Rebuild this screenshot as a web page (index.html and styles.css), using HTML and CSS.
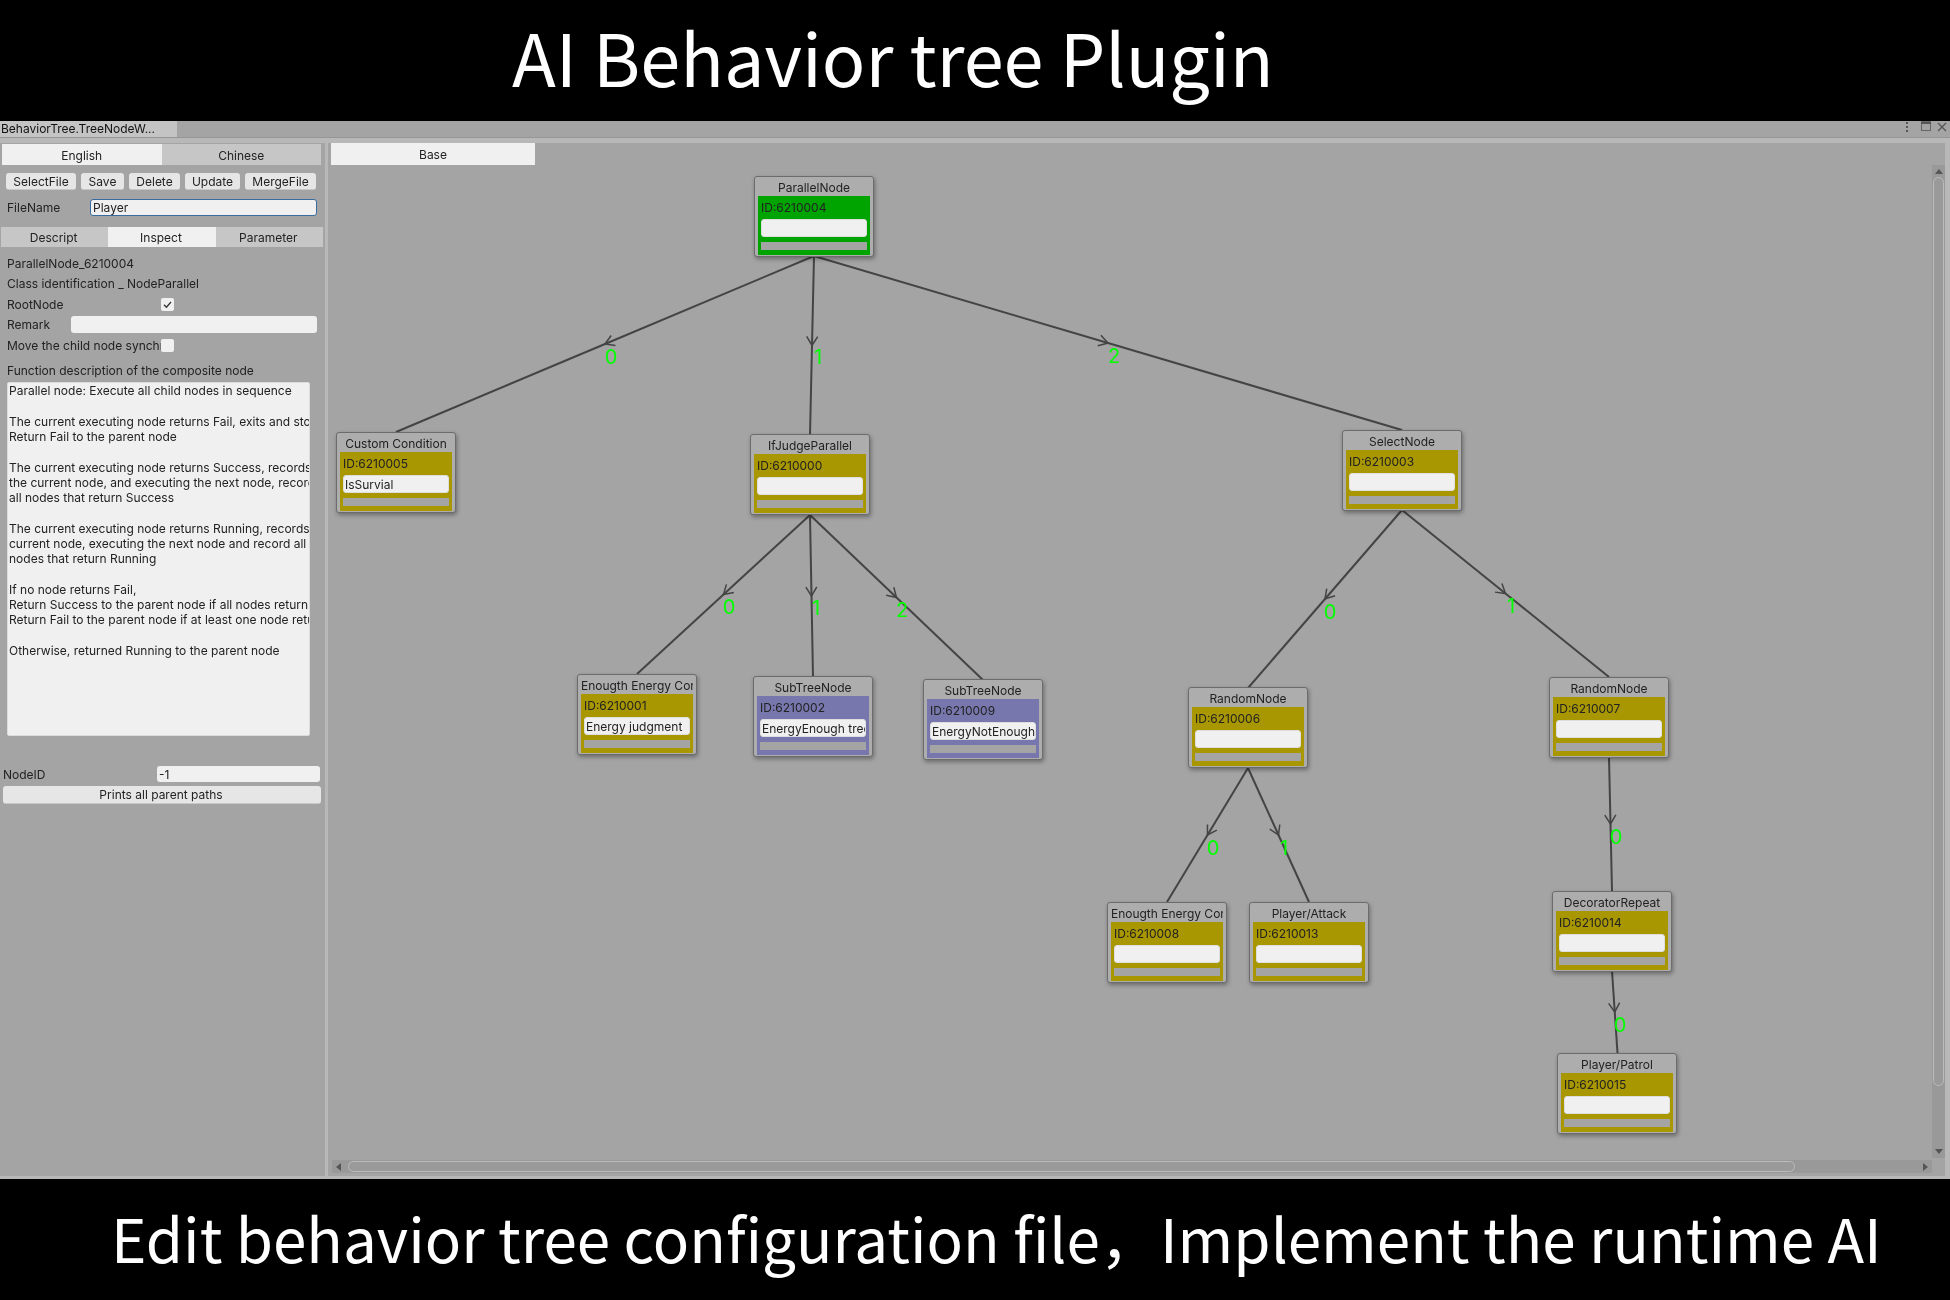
FILE: index.html
```html
<!DOCTYPE html>
<html lang="en">

<head>
  <meta charset="UTF-8">
  <meta name="viewport" content="width=device-width, initial-scale=1.0">
  <title>AI Behavior tree Plugin</title>
  <link rel="stylesheet" href="styles.css">
</head>

<body>
  <div class="banner banner-top">AI Behavior tree Plugin</div>

  <div class="window">
    <!-- Window tab strip -->
    <div class="tabstrip">
      <div class="window-tab">BehaviorTree.TreeNodeW...</div>
      <svg class="window-icons" width="46" height="16" viewBox="0 0 46 16">
        <g fill="#555">
          <rect x="2" y="1" width="2" height="2"/>
          <rect x="2" y="5" width="2" height="2"/>
          <rect x="2" y="9" width="2" height="2"/>
        </g>
        <rect x="17.5" y="1" width="9" height="8.5" fill="none" stroke="#666"/>
        <rect x="17" y="0.5" width="10" height="2.5" fill="#555"/>
        <path d="M34 2 L42 10 M42 2 L34 10" stroke="#555" stroke-width="1.3"/>
      </svg>
    </div>

    <div class="workspace">
      <!-- Left inspector panel -->
      <div class="sidebar">
        <div class="tabs tabs-lang">
          <div class="tab active">English</div>
          <div class="tab">Chinese</div>
        </div>

        <div class="toolbar">
          <div class="btn btn-select">SelectFile</div>
          <div class="btn btn-save">Save</div>
          <div class="btn btn-delete">Delete</div>
          <div class="btn btn-update">Update</div>
          <div class="btn btn-merge">MergeFile</div>
        </div>

        <div class="file-row">
          <span class="file-label">FileName</span>
          <div class="input input-focus">Player</div>
        </div>

        <div class="tabs tabs-view">
          <div class="tab">Descript</div>
          <div class="tab active">Inspect</div>
          <div class="tab">Parameter</div>
        </div>

        <div class="inspect">
          <div class="row">ParallelNode_6210004</div>
          <div class="row">Class identification _ NodeParallel</div>
          <div class="row">
            <span class="row-label">RootNode</span>
            <div class="checkbox">
              <svg width="13" height="13" viewBox="0 0 13 13">
                <path d="M3 6.8 L5.4 9.2 L10 4" fill="none" stroke="#333" stroke-width="1.3"/>
              </svg>
            </div>
          </div>
          <div class="row">
            <span class="remark-label">Remark</span>
            <div class="input remark-input"></div>
          </div>
          <div class="row">
            <span class="row-label">Move the child node synchronously</span>
            <div class="checkbox"></div>
          </div>
          <div class="row row-function">Function description of the composite node</div>
          <div class="description">Parallel node: Execute all child nodes in sequence

The current executing node returns Fail, exits and stops
Return Fail to the parent node

The current executing node returns Success, records
the current node, and executing the next node, records
all nodes that return Success

The current executing node returns Running, records
current node, executing the next node and record all
nodes that return Running

If no node returns Fail,
Return Success to the parent node if all nodes return
Return Fail to the parent node if at least one node returns

Otherwise, returned Running to the parent node</div>
        </div>

        <div class="nodeid-row">
          <span class="nodeid-label">NodeID</span>
          <div class="input nodeid-input">-1</div>
        </div>
        <div class="btn btn-paths">Prints all parent paths</div>
      </div>

      <!-- Behavior tree canvas -->
      <div class="canvas">
        <div class="base-tab">Base</div>

        <svg class="edges" width="1617" height="1033" viewBox="328 143 1617 1033">
          <defs>
            <marker id="arrow" markerUnits="userSpaceOnUse" markerWidth="24" markerHeight="24" refX="12" refY="12" orient="auto">
              <path d="M3 6.5 L12 12 L3 17.5" fill="none" stroke="#444" stroke-width="1.5"/>
            </marker>
          </defs>
          <polyline class="edge" points="814,256 605,344 396,432"/>
          <polyline class="edge" points="814,256 812,345.5 810,435"/>
          <polyline class="edge" points="814,256 1108,343 1402,430"/>
          <polyline class="edge" points="810,515 723.5,594.5 637,674"/>
          <polyline class="edge" points="810,515 811.5,596 813,677"/>
          <polyline class="edge" points="810,515 896.5,597.5 983,680"/>
          <polyline class="edge" points="1402,510 1325,599 1248,688"/>
          <polyline class="edge" points="1402,510 1505.5,593.5 1609,677"/>
          <polyline class="edge" points="1248,768 1207.5,835 1167,902"/>
          <polyline class="edge" points="1248,768 1278.5,835 1309,902"/>
          <polyline class="edge" points="1609,757 1610.5,824 1612,891"/>
          <polyline class="edge" points="1612,971 1614.75,1012 1617.5,1053"/>
          <text class="edge-label" x="611" y="364">0</text>
          <text class="edge-label" x="818" y="364">1</text>
          <text class="edge-label" x="1114" y="363">2</text>
          <text class="edge-label" x="729" y="614">0</text>
          <text class="edge-label" x="816" y="615">1</text>
          <text class="edge-label" x="902" y="617">2</text>
          <text class="edge-label" x="1330" y="619">0</text>
          <text class="edge-label" x="1511" y="613">1</text>
          <text class="edge-label" x="1213" y="855">0</text>
          <text class="edge-label" x="1284" y="855">1</text>
          <text class="edge-label" x="1616" y="844">0</text>
          <text class="edge-label" x="1620" y="1032">0</text>
        </svg>

        <div class="node node-parallel">
          <div class="node-title">ParallelNode</div>
          <div class="node-body body-green">
            <div class="node-id">ID:6210004</div>
            <div class="node-input"></div>
            <div class="node-bar"></div>
          </div>
        </div>

        <div class="node node-custom">
          <div class="node-title">Custom Condition</div>
          <div class="node-body body-olive">
            <div class="node-id">ID:6210005</div>
            <div class="node-input">IsSurvial</div>
            <div class="node-bar"></div>
          </div>
        </div>

        <div class="node node-ifjudge">
          <div class="node-title">IfJudgeParallel</div>
          <div class="node-body body-olive">
            <div class="node-id">ID:6210000</div>
            <div class="node-input"></div>
            <div class="node-bar"></div>
          </div>
        </div>

        <div class="node node-select">
          <div class="node-title">SelectNode</div>
          <div class="node-body body-olive">
            <div class="node-id">ID:6210003</div>
            <div class="node-input"></div>
            <div class="node-bar"></div>
          </div>
        </div>

        <div class="node node-energy1">
          <div class="node-title">/Enougth Energy Con</div>
          <div class="node-body body-olive">
            <div class="node-id">ID:6210001</div>
            <div class="node-input">Energy judgment</div>
            <div class="node-bar"></div>
          </div>
        </div>

        <div class="node node-subtree1">
          <div class="node-title">SubTreeNode</div>
          <div class="node-body body-purple">
            <div class="node-id">ID:6210002</div>
            <div class="node-input">EnergyEnough tree</div>
            <div class="node-bar"></div>
          </div>
        </div>

        <div class="node node-subtree2">
          <div class="node-title">SubTreeNode</div>
          <div class="node-body body-purple">
            <div class="node-id">ID:6210009</div>
            <div class="node-input">EnergyNotEnough</div>
            <div class="node-bar"></div>
          </div>
        </div>

        <div class="node node-random1">
          <div class="node-title">RandomNode</div>
          <div class="node-body body-olive">
            <div class="node-id">ID:6210006</div>
            <div class="node-input"></div>
            <div class="node-bar"></div>
          </div>
        </div>

        <div class="node node-random2">
          <div class="node-title">RandomNode</div>
          <div class="node-body body-olive">
            <div class="node-id">ID:6210007</div>
            <div class="node-input"></div>
            <div class="node-bar"></div>
          </div>
        </div>

        <div class="node node-energy2">
          <div class="node-title">/Enougth Energy Con</div>
          <div class="node-body body-olive">
            <div class="node-id">ID:6210008</div>
            <div class="node-input"></div>
            <div class="node-bar"></div>
          </div>
        </div>

        <div class="node node-attack">
          <div class="node-title">Player/Attack</div>
          <div class="node-body body-olive">
            <div class="node-id">ID:6210013</div>
            <div class="node-input"></div>
            <div class="node-bar"></div>
          </div>
        </div>

        <div class="node node-repeat">
          <div class="node-title">DecoratorRepeat</div>
          <div class="node-body body-olive">
            <div class="node-id">ID:6210014</div>
            <div class="node-input"></div>
            <div class="node-bar"></div>
          </div>
        </div>

        <div class="node node-patrol">
          <div class="node-title">Player/Patrol</div>
          <div class="node-body body-olive">
            <div class="node-id">ID:6210015</div>
            <div class="node-input"></div>
            <div class="node-bar"></div>
          </div>
        </div>

        <!-- Scrollbars -->
        <div class="vscroll">
          <div class="arrow arrow-up"></div>
          <div class="vthumb"></div>
          <div class="arrow arrow-down"></div>
        </div>
        <div class="hscroll">
          <div class="arrow arrow-left"></div>
          <div class="hthumb"></div>
          <div class="arrow arrow-right"></div>
        </div>
      </div>
    </div>
  </div>

  <div class="banner banner-bottom">Edit behavior tree configuration file，Implement the runtime AI</div>
</body>

</html>
```

FILE: styles.css
```css
html,
body {
  height: 1300px;
  overflow: hidden;
}

body {
  margin: 0;
  background-color: #000;
  font-family: Inter, "Liberation Sans", sans-serif;
  font-size: 12px;
  color: #222;
}

.banner {
  height: 121px;
  box-sizing: border-box;
  display: flex;
  align-items: center;
  background-color: #000;
  color: #fff;
  font-family: "Noto Sans CJK SC", "Noto Sans", sans-serif;
  white-space: nowrap;
}

.banner-top {
  padding-left: 512px;
  padding-bottom: 10px;
  font-size: 72px;
}

.banner-bottom {
  padding-left: 111px;
  padding-bottom: 7px;
  font-size: 60.2px;
}

.window {
  height: 1058px;
  display: flex;
  flex-direction: column;
  background-color: #b8b8b8;
  filter: blur(0.4px);
}

.tabstrip {
  height: 16px;
  display: flex;
  justify-content: space-between;
  background-color: #a4a4a4;
  border-bottom: 1px solid #969696;
}

.window-tab {
  width: 177px;
  line-height: 16px;
  padding-left: 1px;
  box-sizing: border-box;
  background-color: #c4c4c4;
  color: #111;
}

.workspace {
  flex: 1;
  display: flex;
  padding-top: 5px;
  padding-right: 5px;
  padding-bottom: 3px;
  min-height: 0;
}

.sidebar {
  width: 325px;
  flex: none;
  background-color: #a4a4a4;
}

.tabs {
  display: flex;
}

.tab {
  flex: 1;
  display: flex;
  align-items: center;
  justify-content: center;
  padding-top: 1px;
  background-color: #c6c6c6;
}

.tab.active {
  background-color: #f0f0f0;
}

.tabs-lang {
  height: 21px;
  width: 319px;
  margin: 1px 0 0 2px;
}

.tabs-view {
  height: 20px;
  width: 322px;
  margin: 11px 0 0 1px;
}

.tabs-view .tab {
  padding-top: 0;
  padding-right: 2px;
}

.toolbar {
  display: flex;
  gap: 5px;
  height: 17px;
  margin: 8px 0 0 6px;
}

.btn {
  display: flex;
  align-items: center;
  justify-content: center;
  border-radius: 3px;
  background-color: #e6e6e6;
  border-bottom: 1px solid #c8c8c8;
  box-sizing: border-box;
}

.btn-select {
  width: 70px;
}

.btn-save {
  width: 43px;
}

.btn-delete {
  width: 51px;
}

.btn-update {
  width: 55px;
}

.btn-merge {
  width: 71px;
}

.btn-paths {
  width: 318px;
  height: 18px;
  margin: 4px 0 0 3px;
  padding-right: 2px;
}

.input {
  box-sizing: border-box;
  background-color: #f0f0f0;
  border-radius: 3px;
  padding-left: 2px;
  display: flex;
  align-items: center;
}

.input-focus {
  width: 227px;
  height: 17px;
  border: 1px solid #3a6b9f;
}

.file-row {
  display: flex;
  align-items: center;
  height: 17px;
  margin-top: 9px;
}

.file-label {
  width: 83px;
  padding-left: 7px;
}

.inspect {
  margin: 6px 0 0 7px;
}

.row {
  height: 20.5px;
  display: flex;
  align-items: center;
  white-space: nowrap;
}

.row-label {
  width: 154px;
  overflow: hidden;
}

.row-function {
  margin-top: 4.25px;
}

.remark-label {
  width: 64px;
}

.remark-input {
  width: 246px;
  height: 17px;
}

.checkbox {
  width: 13px;
  height: 13px;
  border-radius: 2px;
  background-color: #f0f0f0;
}

.checkbox svg {
  display: block;
}

.description {
  width: 303px;
  height: 354px;
  margin-top: 2px;
  box-sizing: border-box;
  padding: 0 0 0 1px;
  line-height: 15.25px;
  background-color: #f0f0f0;
  border: 1px solid #dcdcdc;
  border-radius: 2px;
  white-space: pre;
  overflow: hidden;
}

.nodeid-row {
  display: flex;
  align-items: center;
  height: 16px;
  margin-top: 30px;
}

.nodeid-label {
  width: 154px;
  padding-left: 3px;
}

.nodeid-input {
  width: 163px;
  height: 16px;
}

/* Canvas */
.canvas {
  position: relative;
  flex: 1;
  margin-left: 3px;
  background-color: #a4a4a4;
  overflow: hidden;
}

.base-tab {
  position: absolute;
  left: 3px;
  top: 0;
  width: 204px;
  height: 21px;
  padding-top: 1px;
  display: flex;
  align-items: center;
  justify-content: center;
  background-color: #f0f0f0;
}

.edges {
  position: absolute;
  left: 0;
  top: 0;
}

.edge {
  fill: none;
  stroke: #444;
  stroke-width: 2;
  marker-mid: url(#arrow);
}

.edge-label {
  fill: #00ff00;
  font-size: 20px;
  text-anchor: middle;
}

.node {
  position: absolute;
  width: 120px;
  height: 81px;
  box-sizing: border-box;
  padding: 0 3px 1px;
  display: flex;
  flex-direction: column;
  background-color: #adadad;
  border: 1px solid #6c6c6c;
  border-radius: 3px;
  box-shadow: 1px 2px 4px rgba(0, 0, 0, 0.35);
}

.node-title {
  height: 19px;
  flex: none;
  padding-top: 1px;
  box-sizing: border-box;
  display: flex;
  align-items: center;
  justify-content: center;
  white-space: nowrap;
  overflow: hidden;
}

.node-body {
  flex: 1;
  padding: 0 3px;
  min-height: 0;
}

.body-green {
  background-color: #00a400;
}

.body-olive {
  background-color: #a89700;
}

.body-purple {
  background-color: #7777ae;
}

.node-id {
  height: 23px;
  display: flex;
  align-items: center;
}

.node-input {
  height: 18px;
  box-sizing: border-box;
  padding-left: 1px;
  line-height: 17px;
  background-color: #f0f0f0;
  border: 1px solid #dedede;
  border-radius: 3px;
  white-space: nowrap;
  overflow: hidden;
}

.node-bar {
  height: 8px;
  margin-top: 5px;
  background-color: #a4a4a4;
}

/* Each node sits at its own place on the canvas */
.node-parallel { left: 426px; top: 33px; }
.node-custom { left: 8px; top: 289px; }
.node-ifjudge { left: 422px; top: 291px; }
.node-select { left: 1014px; top: 287px; }
.node-energy1 { left: 249px; top: 531px; }
.node-subtree1 { left: 425px; top: 533px; }
.node-subtree2 { left: 595px; top: 536px; }
.node-random1 { left: 860px; top: 544px; }
.node-random2 { left: 1221px; top: 534px; }
.node-energy2 { left: 779px; top: 759px; }
.node-attack { left: 921px; top: 759px; }
.node-repeat { left: 1224px; top: 748px; }
.node-patrol { left: 1229px; top: 910px; }

/* Scrollbars */
.vscroll {
  position: absolute;
  right: 0;
  top: 22px;
  bottom: 18px;
  width: 13px;
  display: flex;
  flex-direction: column;
  align-items: center;
  justify-content: space-between;
  background-color: #999;
}

.vthumb {
  flex: 1;
  width: 11px;
  margin: 3px 0 63px;
  box-sizing: border-box;
  border: 1px solid #bcbcbc;
  border-radius: 6px;
  background-color: #9a9a9a;
}

.hscroll {
  position: absolute;
  left: 4px;
  right: 13px;
  bottom: 3px;
  height: 13px;
  display: flex;
  align-items: center;
  background-color: #999;
}

.hthumb {
  width: 1447px;
  height: 11px;
  margin-left: 7px;
  box-sizing: border-box;
  border: 1px solid #bcbcbc;
  border-radius: 6px;
  background-color: #9a9a9a;
}

.arrow {
  flex: none;
  width: 0;
  height: 0;
  border-style: solid;
  border-color: transparent;
}

.arrow-up {
  margin-top: 4px;
  border-width: 0 4px 5px;
  border-bottom-color: #555;
}

.arrow-down {
  margin-bottom: 4px;
  border-width: 5px 4px 0;
  border-top-color: #555;
}

.arrow-left {
  margin-left: 4px;
  border-width: 4px 5px 4px 0;
  border-right-color: #555;
}

.arrow-right {
  margin-left: auto;
  margin-right: 4px;
  border-width: 4px 0 4px 5px;
  border-left-color: #555;
}
```
